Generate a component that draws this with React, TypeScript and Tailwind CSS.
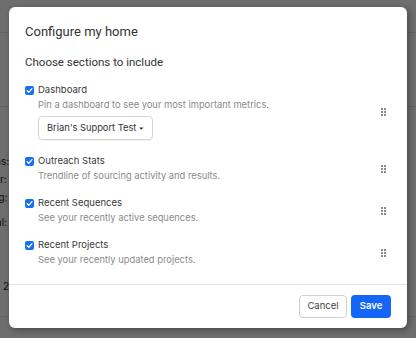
import React from 'react';

const sections = [
  { label: 'Dashboard', desc: 'Pin a dashboard to see your most important metrics.', picker: true },
  { label: 'Outreach Stats', desc: 'Trendline of sourcing activity and results.' },
  { label: 'Recent Sequences', desc: 'See your recently active sequences.' },
  { label: 'Recent Projects', desc: 'See your recently updated projects.' },
];

const behind = [
  { text: 'Opens: 1', top: 'mt-[155px]' },
  { text: 'Answer: 4', top: 'mt-[6px]' },
  { text: 'Pending: 7', top: 'mt-[6px]' },
  { text: 'Total: 8', top: 'mt-[13px]' },
];

function CheckBox() {
  return (
    <span className="flex h-[9px] w-[9px] shrink-0 items-center justify-center rounded-[2px] bg-[#1470f5]">
      <svg width="7" height="7" viewBox="0 0 8 8" fill="none">
        <path d="M1.3 4.3 3.2 6.1 6.8 1.8" stroke="white" strokeWidth="1.5" strokeLinecap="round" strokeLinejoin="round" />
      </svg>
    </span>
  );
}

function Grip() {
  return (
    <svg width="5" height="8" viewBox="0 0 5 8" className="shrink-0">
      {[0, 3].map((x) =>
        [0, 3, 6].map((y) => <rect key={`${x}-${y}`} x={x} y={y} width="2" height="2" fill="#8a8a8a" />)
      )}
    </svg>
  );
}

export default function App() {
  return (
    <div className="relative h-[338px] w-[416px] overflow-hidden bg-white font-['Inter',sans-serif] text-[#333]">
      {/* page behind the modal */}
      <div className="absolute inset-0">
        <div className="h-[33px] border-b border-[#e2e2e2]" />
        <div className="h-[74px] border-b border-[#e2e2e2]" />
        <div className="absolute left-0 top-0 flex flex-col text-[10px] leading-[12px] text-[#1e1e1e]">
          {behind.map((b) => (
            <div key={b.text} className={`flex w-[16px] justify-end whitespace-nowrap ${b.top}`}>
              {b.text}
            </div>
          ))}
          <div className="mt-[52px] pl-[3px]">2</div>
        </div>
        <div className="absolute bottom-0 left-0 right-0 h-[22px] border-t border-[#e2e2e2]" />
      </div>

      {/* overlay */}
      <div className="absolute inset-0 bg-black/[0.57]">
        <div className="absolute left-[9px] top-[7px] flex h-[321px] w-[398px] flex-col rounded-[6px] bg-white shadow-[2px_2px_6px_rgba(0,0,0,0.35)]">
          <div className="flex-1 px-4 pt-4">
            <h2 className="font-['Roboto',sans-serif] text-[13px] leading-[18px] text-[#333]">Configure my home</h2>
            <h3 className="mt-[13px] font-['Roboto',sans-serif] text-[11.5px] leading-[16px] text-[#333]">
              Choose sections to include
            </h3>

            <div className="mt-[13px] flex flex-col gap-[13px]">
              {sections.map((s) => (
                <div key={s.label} className="flex items-center pr-[5px]">
                  <div className="flex-1">
                    <div className="flex items-center gap-[4px]">
                      <CheckBox />
                      <span className="text-[9.5px] leading-[14px] text-[#3a3a3a]">{s.label}</span>
                    </div>
                    <p className="mt-px pl-[13px] text-[9.35px] leading-[14px] text-[#8a8a8a]">{s.desc}</p>
                    {s.picker && (
                      <div className="ml-[13px] mt-[4px] mb-px flex h-[24px] w-[115px] items-center gap-[3px] whitespace-nowrap rounded-[4px] border border-[#d4d4d4] px-[8px] text-[9.3px] text-[#333] shadow-[0_1px_1px_rgba(0,0,0,0.06)]">
                        <span>Brian's Support Test</span>
                        <svg width="5" height="3" viewBox="0 0 6 4">
                          <path d="M0 0.5h6L3 3.5z" fill="#333" />
                        </svg>
                      </div>
                    )}
                  </div>
                  <Grip />
                </div>
              ))}
            </div>
          </div>

          <div className="flex justify-end gap-[4px] border-t border-[#e4e4e4] px-4 pb-[10px] pt-[10px]">
            <button className="h-[23px] w-[48px] rounded-[4px] border border-[#cfcfcf] bg-white text-[9.5px] text-[#444]">
              Cancel
            </button>
            <button className="h-[23px] w-[40px] rounded-[4px] bg-[#1366f7] text-[9.5px] font-semibold text-white">
              Save
            </button>
          </div>
        </div>
      </div>
    </div>
  );
}
